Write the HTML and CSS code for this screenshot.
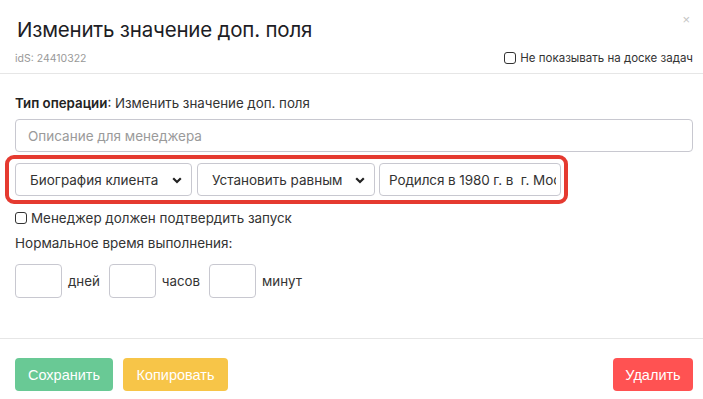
FILE: index.html
```html
<!DOCTYPE html>
<html lang="ru">
<head>
<meta charset="utf-8">
<link rel="stylesheet" href="styles.css">
</head>
<body>
<div class="modal">
  <div class="header">
    <div class="title-row">
      <h1 class="title">Изменить значение доп. поля</h1>
      <span class="close">×</span>
    </div>
    <div class="sub-row">
      <span class="ids">idS: 24410322</span>
      <label class="check small"><span class="box"></span>Не показывать на доске задач</label>
    </div>
  </div>
  <div class="body">
    <div class="optype"><b>Тип операции</b>: Изменить значение доп. поля</div>
    <div class="input wide placeholder">Описание для менеджера</div>
    <div class="highlight">
      <div class="input select s1">Биография клиента<svg class="chev" width="10" height="7" viewBox="0 0 10 7"><path d="M1.2 1.3 L5 5 L8.8 1.3" fill="none" stroke="#222" stroke-width="2.2"/></svg></div>
      <div class="input select s2">Установить равным<svg class="chev" width="10" height="7" viewBox="0 0 10 7"><path d="M1.2 1.3 L5 5 L8.8 1.3" fill="none" stroke="#222" stroke-width="2.2"/></svg></div>
      <div class="input s3"><span class="clip">Родился в 1980 г. в&nbsp; г. Москве</span></div>
    </div>
    <label class="check confirm"><span class="box"></span>Менеджер должен подтвердить запуск</label>
    <div class="time-label">Нормальное время выполнения:</div>
    <div class="time-row">
      <div class="input tiny"></div><span class="unit">дней</span>
      <div class="input tiny"></div><span class="unit">часов</span>
      <div class="input tiny"></div><span class="unit">минут</span>
    </div>
  </div>
  <div class="footer">
    <div class="left-btns">
      <button class="btn green">Сохранить</button>
      <button class="btn yellow">Копировать</button>
    </div>
    <button class="btn red">Удалить</button>
  </div>
</div>
</body>
</html>
```

FILE: styles.css
```css
* { box-sizing: border-box; }
html, body { margin: 0; padding: 0; background: #fff; }
body { font-family: Inter, "Noto Sans", sans-serif; color: #333; width: 703px; height: 399px; overflow: hidden; }

.header { padding: 16px 10px 7px 17px; border-bottom: 1px solid #e6e6e6; }
.title-row { display: flex; justify-content: space-between; align-items: flex-start; }
.title { margin: 0; font-size: 20.5px; font-weight: 400; line-height: 28px; color: #1d1d25; letter-spacing: -0.2px; }
.close { font-family: "Liberation Sans", sans-serif; font-size: 13px; color: #c4c4c4; line-height: 10px; margin-top: -1px; margin-right: 3px; }
.sub-row { display: flex; justify-content: space-between; align-items: center; height: 16px; margin-top: 6px; margin-left: -2px; }
.ids { font-size: 10.5px; color: #999; }

.check { display: flex; align-items: center; color: #333; }
.check .box { width: 12px; height: 12px; border: 1px solid #333; border-radius: 3px; margin-right: 4px; display: inline-block; flex: none; }
.check.small { font-size: 11.5px; }

.body { padding: 20px 10px 40px 15px; }
.optype { font-size: 13.3px; line-height: 18px; color: #333; }
.optype b { font-weight: 600; color: #222; }

.input { border: 1px solid #c8c8d0; border-radius: 4px; background: #fff; height: 33px; font-size: 13.5px; display: flex; align-items: center; color: #333; }
.wide { margin-top: 7px; width: 678px; padding-left: 12px; }
.placeholder { color: #9a9a9a; }

.highlight { display: inline-flex; margin: 3px 0 0 -10px; border: 4px solid #e53a30; border-radius: 9px; padding: 4px 3px 4px 6px; gap: 5px; }
.select { justify-content: space-between; padding: 0 9px 0 14px; }
.s1 { width: 177px; }
.s2 { width: 178px; }
.s3 { width: 182px; padding: 0 4px 0 9px; margin-left: -1px; }
.clip { overflow: hidden; white-space: nowrap; display: block; width: 100%; letter-spacing: -0.1px; }
.chev { flex: none; margin-top: 1px; }

.confirm { font-size: 13.4px; height: 16px; margin-top: 6px; }
.confirm .box { margin-right: 4px; }
.time-label { font-size: 13.5px; line-height: 18px; margin-top: 8px; }
.time-row { display: flex; align-items: center; margin-top: 12px; }
.tiny { width: 47px; height: 34px; }
.unit { font-size: 13.3px; margin: 0 9px 0 6px; }

.footer { border-top: 1px solid #e6e6e6; padding: 19px 10px 9px 15px; display: flex; justify-content: space-between; }
.left-btns { display: flex; gap: 10px; }
.btn { border: none; border-radius: 4px; height: 33px; color: #fff; font-family: "Liberation Sans", Arial, sans-serif; font-size: 14.5px; padding: 0 10px; }
.green { background: #69c995; width: 98px; }
.yellow { background: #f7c548; width: 105px; }
.red { background: #ff5252; width: 80px; }
```
